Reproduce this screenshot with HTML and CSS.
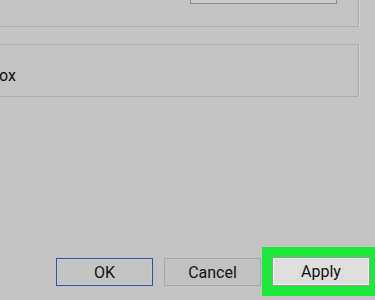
FILE: index.html
```html
<!DOCTYPE html>
<html lang="en">
<head>
    <meta charset="UTF-8">
    <meta name="viewport" content="width=device-width, initial-scale=1.0">
    <title>Properties</title>
    <link rel="stylesheet" href="styles.css">
</head>
<body>
    <div class="dialog">
        <div class="group group-top">
            <div class="stub-button"></div>
        </div>
        <div class="group group-option">
            <span class="option-label">ox</span>
        </div>
        <div class="actions">
            <button class="btn btn-default">OK</button>
            <button class="btn">Cancel</button>
            <div class="highlight">
                <button class="btn btn-apply">Apply</button>
            </div>
        </div>
    </div>
</body>
</html>
```

FILE: styles.css
```css
body {
    margin: 0;
    padding: 0;
    background-color: #c3c3c3;
    font-family: Roboto, "Noto Sans", sans-serif;
    color: #111;
    overflow: hidden;
}
.dialog {
    width: 375px;
    height: 300px;
    display: flex;
    flex-direction: column;
    overflow: hidden;
}
.group {
    margin-right: 16px;
    border-right: 1px solid #adadad;
    box-shadow: 1px 0 0 #d2d2d2;
}
.group-top {
    height: 26px;
    border-bottom: 1px solid #adadad;
}
.stub-button {
    margin-left: 190px;
    width: 145px;
    height: 3px;
    border: 1px solid #8e8e8e;
    border-top: none;
    background-color: #cacaca;
}
.group-option {
    margin-top: 17px;
    height: 51px;
    border-top: 1px solid #adadad;
    border-bottom: 1px solid #adadad;
    display: flex;
    align-items: center;
}
.option-label {
    font-size: 16px;
    margin-left: -1px;
    padding-top: 10px;
}
.actions {
    margin-top: auto;
    margin-bottom: 4px;
    display: flex;
    align-items: flex-start;
    padding-left: 56px;
}
.btn {
    flex-shrink: 0;
    width: 97px;
    height: 28px;
    margin-top: 11px;
    margin-right: 11px;
    border: 1px solid #a6a6a6;
    background-color: #c1c1c1;
    font-family: inherit;
    font-size: 16px;
    color: #111;
    padding: 0;
}
.btn-default {
    border-color: #2a55a8;
    box-shadow: inset 0 0 0 1px #c9c9c9;
    background-color: #c4c4c4;
}
.highlight {
    flex-shrink: 0;
    margin-left: -10px;
    border: 10px solid #1ee83a;
    padding: 0;
    background-color: #c3c3c3;
}
.btn-apply {
    margin: 0;
    width: 98px;
    height: 29px;
    border-color: #9a9a9a;
    background-color: #dedede;
    box-shadow: inset 0 0 0 1px #ececec;
}
```
